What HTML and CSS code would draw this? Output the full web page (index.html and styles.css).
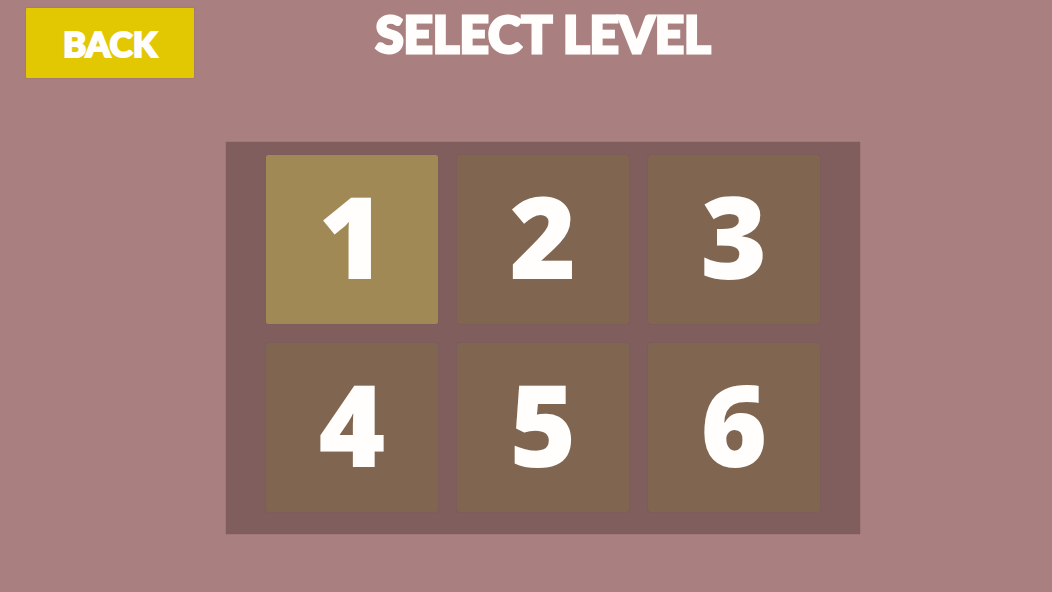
FILE: index.html
```
<!DOCTYPE html>
<html lang="en">
<head>
  <meta charset="UTF-8">
  <meta name="viewport" content="width=device-width, initial-scale=1.0">
  <title>Select Level</title>
  <link rel="stylesheet" href="styles.css">
</head>
<body>
  <div class="screen">
    <!-- Header -->
    <button class="back-button" type="button">BACK</button>
    <h1 class="title">SELECT LEVEL</h1>

    <!-- Levels -->
    <main class="level-panel">
      <button class="level unlocked" type="button">1</button>
      <button class="level" type="button">2</button>
      <button class="level" type="button">3</button>
      <button class="level" type="button">4</button>
      <button class="level" type="button">5</button>
      <button class="level" type="button">6</button>
    </main>
  </div>
</body>
</html>
```
FILE: styles.css
```
/* Global Styles */
* {
  box-sizing: border-box;
}

body {
  margin: 0;
  min-height: 100vh;
  background: #aa7f80;
  color: #fffefc;
  font-family: "Open Sans", "Noto Sans", sans-serif;
  font-weight: 800;
}

button {
  border: none;
  padding: 0;
  color: inherit;
  font: inherit;
  cursor: pointer;
}

/* Side columns around the level panel */
.screen {
  display: grid;
  grid-template-columns: 226fr 634fr 192fr;
  padding: 8px 0;
}

/* Header */
.back-button,
.title {
  font-family: Lato, sans-serif;
  font-weight: 900;
}

.back-button {
  height: 70px;
  margin: 0 32px 0 26px;
  background: #e2c703;
  border-radius: 1px;
  box-shadow: 0 0 2px #987451;
  font-size: 35px;
  line-height: 70px;
  -webkit-text-stroke: 2px #fffefc;
}

.title {
  margin: 0;
  font-size: 51px;
  line-height: 52px;
  text-align: center;
  white-space: nowrap;
  -webkit-text-stroke: 3px #fffefc;
}

/* Level Panel */
.level-panel {
  grid-column: 2;
  display: grid;
  grid-template-columns: repeat(3, 1fr);
  gap: 19px;
  margin-top: 64px;
  padding: 13px 40px 22px;
  background: #805e5e;
  box-shadow: 0 0 1px #795757;
}

.level {
  aspect-ratio: 172 / 169;
  padding-bottom: 10px;
  background: #806550;
  border-radius: 2px;
  box-shadow: 0 0 1px #70524b;
  font-size: 114px;
  line-height: 1;
}

.level.unlocked {
  background: #a08955;
}
```
